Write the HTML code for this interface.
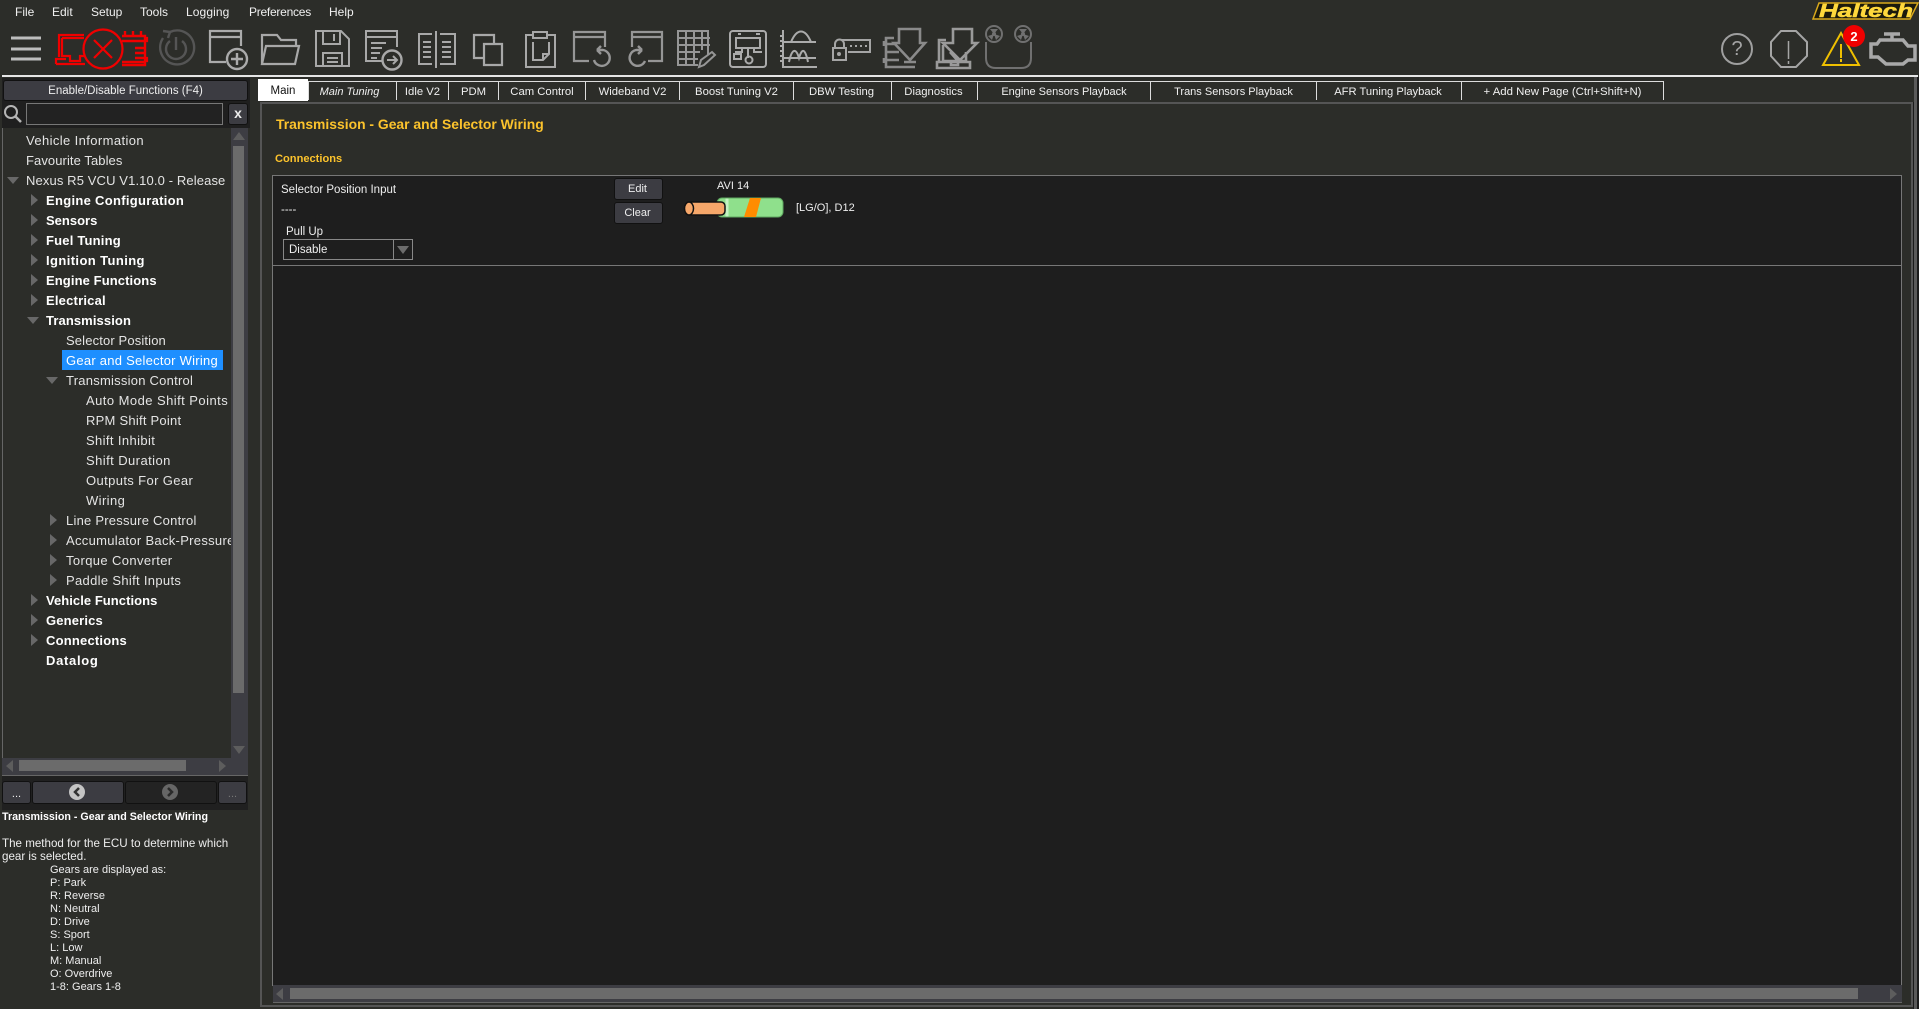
<!DOCTYPE html>
<html><head><meta charset="utf-8"><title>Haltech</title>
<style>
html,body{margin:0;padding:0;width:1919px;height:1009px;overflow:hidden;background:#2c2d29}
body{position:relative;font-family:"Liberation Sans",sans-serif;color:#eee;font-size:12px}
.a{position:absolute;white-space:nowrap}
.m{top:3px;line-height:18px;font-size:12px;color:#f0f0f0}
.t{top:81px;height:19px;line-height:20px;text-align:center;font-size:11.3px;color:#f0f0f0;border-left:1px solid #ddd;border-top:1px solid #ddd;box-sizing:border-box}
.r{line-height:20px;height:20px;font-size:13px;color:#e4e4e4;overflow:hidden}
.b{font-weight:bold;color:#fff}
.tr{position:absolute;width:0;height:0}
.rt{border-left:7px solid #686868;border-top:6px solid transparent;border-bottom:6px solid transparent}
.dn{border-top:7px solid #686868;border-left:6px solid transparent;border-right:6px solid transparent}
.btn{position:absolute;background:#3c3c42;border:1px solid #111;border-radius:3px;box-sizing:border-box;text-align:center;color:#eee}
.d{left:2px;font-size:11px;line-height:13px;color:#eee}
svg{position:absolute;left:0;top:0}
</style></head><body>

<div class="a m" style="left:15px">File</div>
<div class="a m" style="left:52px">Edit</div>
<div class="a m" style="left:91px">Setup</div>
<div class="a m" style="left:140px">Tools</div>
<div class="a m" style="left:186px;letter-spacing:.1px">Logging</div>
<div class="a m" style="left:249px;letter-spacing:-.25px">Preferences</div>
<div class="a m" style="left:329px">Help</div>

<svg width="1919" height="78" viewBox="0 0 1919 78" fill="none" stroke="#a8a8a8" stroke-width="2">
<!-- hamburger -->
<path d="M11 38h30M11 49h30M11 59h30" stroke="#bdbdbd" stroke-width="3"/>
<!-- red disconnected -->
<g stroke="#f00000" stroke-width="2.2">
<path d="M84 35H59V57M62 38H84M62 38V56H70V61H80V56H84M56 64V59H66M56 64H85"/>
<circle cx="103" cy="49" r="19.500"/>
<path d="M94 40L112 58M112 40L94 58"/>
<path d="M122 36H145V65H122M125 31V36M133 31V36M141 31V36M122 41H145M135 48H145M135 53H145M135 58H145M122 62H145" stroke-width="2.400"/>
<path d="M145 38h2v3h-2M145 58h2v3h-2"/>
</g>
<!-- power -->
<g stroke="#555" stroke-width="2.4">
<path d="M170 32A17 17 0 1 1 163 38"/>
<path d="M163 31L170 32L168 38"/>
<path d="M170 41A10 10 0 1 0 182 41M176 37V50"/>
</g>
<!-- new window -->
<g stroke="#ababab">
<path d="M226 62H210V31H241V46M210 37H241" stroke-width="2.2"/>
<circle cx="237" cy="59" r="10" stroke-width="2.4"/>
<path d="M237 53V65M231 59H243" stroke-width="2.4"/>
</g>
<!-- folder -->
<path d="M262 64V35H277L281 40H296V46M262 64L266 46H299L295 64Z" stroke-width="2.2"/>
<!-- save -->
<path d="M316 31H341L349 39V66H316ZM323 31V44H340V31M334 34V41M323 66V53H342V66M327 58H338M327 62H338" stroke-width="2"/>
<!-- doc arrow -->
<path d="M382 61H366V31H397V47M366 37H397M371 43H386M371 48H382M371 53H380M371 58H377" stroke-width="2"/>
<circle cx="392" cy="60" r="9.5" stroke-width="2.4"/>
<path d="M387 60H397M393 56L397 60L393 64" stroke-width="2"/>
<!-- columns -->
<path d="M436 31V68M432 34H419V64H432M440 34H455V64H440M423 42H431M423 47H431M423 52H431M423 57H431M442 42H451M442 47H451M442 52H451M442 57H451" stroke-width="2"/>
<!-- copy -->
<path d="M484 58H474V35H494V44M484 44H502V65H484Z" stroke-width="2.2"/>
<!-- clipboard -->
<path d="M533 35H526V67H555V35H547M533 32H547V38H533ZM533 42V60H543L549 54V42M543 60V54H549" stroke-width="2"/>
<!-- undo -->
<g stroke="#969696" stroke-width="2.2">
<path d="M589 61H574V32H605V47M574 37H605"/>
<path d="M597 50H603A8 8 0 1 1 594 60M597 50L601 46M597 50L601 54" stroke-width="2.4"/>
<path d="M632 47V37H662V32H632V37M662 32V61H648"/>
<path d="M642 50H636A8 8 0 1 0 645 61M642 50L638 46M642 50L638 54" stroke-width="2.4"/>
<!-- table -->
<path d="M708 55V31H678V65H698M678 38H710M678 45H710M678 52H700M678 59H698M686 31V65M694 31V65M702 31V50" stroke-width="2"/>
<path d="M699 67L701 60L712 52L715 55L704 65Z" stroke-width="2"/>
</g>
<!-- board -->
<g stroke="#ababab" stroke-width="2">
<rect x="730" y="31" width="36" height="36" rx="3"/>
<path d="M736 38H760V48H736ZM738 34H741M756 34H760M748 48V58M742 48V52H735M754 48V52H762"/>
<rect x="734" y="54" width="7" height="5"/><circle cx="749" cy="60" r="3.5"/>
<path d="M783 30V67H817M780 36h3M780 41h3M780 46h3M780 51h3M780 56h3M780 61h3M783 42H816M783 58H816M791 42C797 28 805 28 811 42M789 62C792 48 796 48 799 58C802 48 805 48 808 62" stroke-width="2"/>
</g>
<!-- lock card -->
<g stroke="#a5a5a5" stroke-width="2">
<path d="M841 40H870V52H848M833 48V60H846V48ZM835 48V44A4 4 0 0 1 844 44V48"/>
<path d="M850 46H868" stroke-dasharray="2 3"/><circle cx="839" cy="54" r="1"/>
</g>
<!-- ecu download -->
<g stroke="#8a8a8a" stroke-width="2.6">
<path d="M894 38H886V67H915M886 44H897M886 52H899M886 60H899M884 41v5M884 58v5M904 62H916"/>
<path d="M899 29H920V43H925L910 60L894 43H899Z"/>
</g>
<!-- laptop download -->
<g stroke="#9a9a9a" stroke-width="2.6">
<path d="M946 40H939V61M943 45V61H965M950 52L958 61M966 52V61M937 68V62H970V68ZM951 62V65H958V62"/>
<path d="M953 29H972V43H977L960 60L943 43H953Z"/>
</g>
<!-- reels -->
<g stroke="#707070" stroke-width="2">
<circle cx="994" cy="34" r="8"/><circle cx="1023" cy="34" r="8"/>
<path d="M986 42V58Q986 68 996 68H1021Q1031 68 1031 58V42"/>
</g>
<g fill="#707070" stroke="none">
<circle cx="994" cy="34" r="2"/><circle cx="1023" cy="34" r="2"/>
<path d="M990 29L994 34L998 29ZM988 36L994 34L992 40ZM1000 36L994 34L996 40ZM1019 29L1023 34L1027 29ZM1017 36L1023 34L1021 40ZM1029 36L1023 34L1025 40Z"/>
</g>
<!-- right icons -->
<circle cx="1737" cy="49" r="15" stroke="#9f9f9f" stroke-width="2"/>
<text x="1737" y="55" font-family="Liberation Sans" font-size="20" fill="#a5a5a5" stroke="none" text-anchor="middle">?</text>
<path d="M1781 31H1796L1807 42V56L1796 67H1781L1771 56V42Z" stroke="#a5a5a5" stroke-width="2"/>
<path d="M1788.500 41V59M1788.500 61V64" stroke="#a5a5a5" stroke-width="1.500"/>
<path d="M1841 33L1859 65H1823Z" stroke="#f0c000" stroke-width="2"/>
<path d="M1841 44V58M1841 59V62" stroke="#f0c000" stroke-width="2"/>
<circle cx="1854" cy="36" r="11" fill="#f00000" stroke="none"/>
<text x="1854" y="41" font-family="Liberation Sans" font-weight="bold" font-size="13" fill="#fff" stroke="none" text-anchor="middle">2</text>
<path d="M1884 34H1900M1892 34V40M1880 40H1903L1908 46H1915V60H1908L1903 64H1886L1878 57H1871V44H1877Z" stroke="#a9a9a9" stroke-width="3.500"/>
<!-- logo -->
<path d="M1819 3H1918L1910 19H1813Z" fill="#1c1a0c" stroke="#d9a91c" stroke-width="1.500"/>
<text x="1866" y="17" font-family="Liberation Sans" font-weight="bold" font-style="italic" font-size="18" textLength="94" lengthAdjust="spacingAndGlyphs" fill="#ffd83c" stroke="#ffd83c" stroke-width=".5" text-anchor="middle">Haltech</text>
</svg>

<!-- top white line -->
<div class="a" style="left:2px;top:75px;width:1916px;height:2px;background:#e6e6e6"></div>

<!-- sidebar -->
<div class="a" style="left:0;top:77px;width:260px;height:932px;background:#2c2d29"></div>
<div class="a" style="left:2px;top:78px;width:248px;height:50px;background:#1f1f1f"></div>
<div class="btn" style="left:3px;top:80px;width:245px;height:21px;line-height:20px;font-size:11.500px">Enable/Disable Functions (F4)</div>
<svg width="24" height="24" style="left:1px;top:102px" fill="none" stroke="#b5b5b5"><circle cx="10" cy="10" r="6" stroke-width="2"/><path d="M14 14L20 20" stroke-width="2.500"/></svg>
<div class="a" style="left:26px;top:103px;width:197px;height:22px;border:1px solid #777;box-sizing:border-box;background:#222"></div>
<div class="btn" style="left:228px;top:103px;width:20px;height:22px;font-weight:bold;line-height:19px;font-size:14px">x</div>

<!-- tree -->
<div class="a" style="left:2px;top:128px;width:246px;height:648px;border-left:1px solid #666;border-bottom:1px solid #666;box-sizing:border-box;overflow:hidden">
</div>
<div class="a" style="left:62px;top:350px;width:161px;height:20px;background:#1e8fff"></div>
<div class="a r" style="left:26px;top:131px;letter-spacing:.39px">Vehicle Information</div>
<div class="a r" style="left:26px;top:151px;letter-spacing:.08px">Favourite Tables</div>
<div class="a r" style="left:26px;top:171px;letter-spacing:.12px">Nexus R5 VCU V1.10.0 - Release</div>
<div class="a r b" style="left:46px;top:191px;letter-spacing:.3px">Engine Configuration</div>
<div class="a r b" style="left:46px;top:211px">Sensors</div>
<div class="a r b" style="left:46px;top:231px;letter-spacing:.2px">Fuel Tuning</div>
<div class="a r b" style="left:46px;top:251px;letter-spacing:.4px">Ignition Tuning</div>
<div class="a r b" style="left:46px;top:271px;letter-spacing:.1px">Engine Functions</div>
<div class="a r b" style="left:46px;top:291px;letter-spacing:.2px">Electrical</div>
<div class="a r b" style="left:46px;top:311px;letter-spacing:.1px">Transmission</div>
<div class="a r" style="left:66px;top:331px;letter-spacing:.14px">Selector Position</div>
<div class="a r" style="left:66px;top:351px;color:#fff;letter-spacing:.25px">Gear and Selector Wiring</div>
<div class="a r" style="left:66px;top:371px;letter-spacing:.24px">Transmission Control</div>
<div class="a r" style="left:86px;top:391px;letter-spacing:.45px">Auto Mode Shift Points</div>
<div class="a r" style="left:86px;top:411px;letter-spacing:.24px">RPM Shift Point</div>
<div class="a r" style="left:86px;top:431px;letter-spacing:.38px">Shift Inhibit</div>
<div class="a r" style="left:86px;top:451px;letter-spacing:.43px">Shift Duration</div>
<div class="a r" style="left:86px;top:471px;letter-spacing:.38px">Outputs For Gear</div>
<div class="a r" style="left:86px;top:491px;letter-spacing:.4px">Wiring</div>
<div class="a r" style="left:66px;top:511px;letter-spacing:.23px">Line Pressure Control</div>
<div class="a r" style="left:66px;top:531px;width:165px;letter-spacing:.3px">Accumulator Back-Pressure</div>
<div class="a r" style="left:66px;top:551px;letter-spacing:.38px">Torque Converter</div>
<div class="a r" style="left:66px;top:571px;letter-spacing:.32px">Paddle Shift Inputs</div>
<div class="a r b" style="left:46px;top:591px;letter-spacing:.05px">Vehicle Functions</div>
<div class="a r b" style="left:46px;top:611px;letter-spacing:.15px">Generics</div>
<div class="a r b" style="left:46px;top:631px;letter-spacing:.2px">Connections</div>
<div class="a r b" style="left:46px;top:651px;letter-spacing:.7px">Datalog</div>

<div class="tr dn" style="left:7px;top:177px"></div>
<div class="tr rt" style="left:31px;top:194px"></div>
<div class="tr rt" style="left:31px;top:214px"></div>
<div class="tr rt" style="left:31px;top:234px"></div>
<div class="tr rt" style="left:31px;top:254px"></div>
<div class="tr rt" style="left:31px;top:274px"></div>
<div class="tr rt" style="left:31px;top:294px"></div>
<div class="tr dn" style="left:27px;top:317px"></div>
<div class="tr dn" style="left:46px;top:377px"></div>
<div class="tr rt" style="left:50px;top:514px"></div>
<div class="tr rt" style="left:50px;top:534px"></div>
<div class="tr rt" style="left:50px;top:554px"></div>
<div class="tr rt" style="left:50px;top:574px"></div>
<div class="tr rt" style="left:31px;top:594px"></div>
<div class="tr rt" style="left:31px;top:614px"></div>
<div class="tr rt" style="left:31px;top:634px"></div>

<!-- tree scrollbars -->
<div class="a" style="left:231px;top:128px;width:17px;height:630px;background:#3d3d43"></div>
<div class="a" style="left:233px;top:146px;width:11px;height:547px;background:#6b6b6b"></div>
<div class="tr" style="left:233px;top:132px;border-bottom:8px solid #5d5d5d;border-left:6px solid transparent;border-right:6px solid transparent"></div>
<div class="tr dn" style="left:233px;top:746px;border-top-color:#5d5d5d;border-top-width:8px"></div>
<div class="a" style="left:2px;top:758px;width:246px;height:17px;background:#3d3d43;border-bottom:1px solid #666"></div>
<div class="a" style="left:19px;top:760px;width:167px;height:11px;background:#6b6b6b"></div>
<div class="tr" style="left:6px;top:760px;border-right:7px solid #5d5d5d;border-top:6px solid transparent;border-bottom:6px solid transparent"></div>
<div class="tr rt" style="left:219px;top:760px;border-left-color:#5d5d5d"></div>

<!-- nav -->
<div class="a" style="left:2px;top:776px;width:246px;height:34px;background:#202020"></div>
<div class="btn" style="left:2px;top:781px;width:29px;height:23px;line-height:24px;font-size:11px">...</div>
<div class="btn" style="left:32px;top:781px;width:92px;height:23px"></div>
<div class="btn" style="left:125px;top:781px;width:92px;height:23px;background:#232323"></div>
<div class="btn" style="left:218px;top:781px;width:29px;height:23px;line-height:24px;font-size:11px;color:#777">...</div>
<svg width="260" height="30" style="left:0;top:778px" fill="none" stroke-width="2.500">
<circle cx="77" cy="14" r="8" fill="#c4c4c4"/><path d="M79 10L75 14L79 18" stroke="#333"/>
<circle cx="170" cy="14" r="8" fill="#666"/><path d="M168 10L172 14L168 18" stroke="#2a2a2a"/>
</svg>

<!-- description -->
<div class="a d" style="top:811px;font-weight:bold;color:#fff;font-size:10.700px">Transmission - Gear and Selector Wiring</div>
<div class="a d" style="top:837px;font-size:11.600px">The method for the ECU to determine which</div>
<div class="a d" style="top:850px;font-size:11.600px">gear is selected.</div>
<div class="a d" style="top:864px;left:50px">Gears are displayed as:</div>
<div class="a d" style="top:877px;left:50px">P: Park</div>
<div class="a d" style="top:890px;left:50px">R: Reverse</div>
<div class="a d" style="top:903px;left:50px">N: Neutral</div>
<div class="a d" style="top:916px;left:50px">D: Drive</div>
<div class="a d" style="top:929px;left:50px">S: Sport</div>
<div class="a d" style="top:942px;left:50px">L: Low</div>
<div class="a d" style="top:955px;left:50px">M: Manual</div>
<div class="a d" style="top:968px;left:50px">O: Overdrive</div>
<div class="a d" style="top:981px;left:50px">1-8: Gears 1-8</div>

<!-- tabs -->
<div class="a" style="left:258px;top:79px;width:50px;height:22px;background:#fff;color:#111;text-align:center;line-height:24px;font-size:11.500px">Main</div>
<div class="a t" style="left:308px;width:88px;font-style:italic;font-size:11px;padding-right:6px">Main Tuning</div>
<div class="a t" style="left:396px;width:52px">Idle V2</div>
<div class="a t" style="left:448px;width:50px">PDM</div>
<div class="a t" style="left:498px;width:87px">Cam Control</div>
<div class="a t" style="left:585px;width:94px">Wideband V2</div>
<div class="a t" style="left:679px;width:114px">Boost Tuning V2</div>
<div class="a t" style="left:793px;width:98px;padding-right:2px">DBW Testing</div>
<div class="a t" style="left:891px;width:86px;padding-right:2px">Diagnostics</div>
<div class="a t" style="left:977px;width:173px;font-size:11px">Engine Sensors Playback</div>
<div class="a t" style="left:1150px;width:166px;font-size:11px">Trans Sensors Playback</div>
<div class="a t" style="left:1316px;width:145px;font-size:11.200px;padding-right:2px">AFR Tuning Playback</div>
<div class="a t" style="left:1461px;width:203px;border-right:1px solid #ddd;font-size:11.400px">+ Add New Page (Ctrl+Shift+N)</div>

<!-- main panel -->
<div class="a" style="left:260px;top:102px;width:1653px;height:905px;border:2px solid #555;border-bottom:0;box-sizing:border-box;background:#2c2d29"></div>
<div class="a" style="left:1913px;top:102px;width:1px;height:907px;background:#1b1b1b"></div>
<div class="a" style="left:1914px;top:77px;width:3px;height:932px;background:#5a5a5a"></div>
<div class="a" style="left:1917px;top:77px;width:2px;height:932px;background:#1b1b1b"></div>
<div class="a" style="left:262px;top:1005px;width:1650px;height:2px;background:#555"></div>

<div class="a" style="left:276px;top:115px;font-weight:bold;font-size:13.900px;line-height:18px;color:#fcc32c">Transmission - Gear and Selector Wiring</div>
<div class="a" style="left:275px;top:151px;font-weight:bold;font-size:11.100px;line-height:16px;color:#fcc32c">Connections</div>

<div class="a" style="left:272px;top:175px;width:1630px;height:811px;background:#1e1e1e;border:1px solid #777;border-bottom:0;box-sizing:border-box"></div>
<div class="a" style="left:273px;top:265px;width:1628px;height:1px;background:#777"></div>

<div class="a" style="left:281px;top:182px;font-size:11.500px;line-height:16px">Selector Position Input</div>
<div class="a" style="left:281px;top:202px;font-size:11.500px;line-height:16px">----</div>
<div class="a" style="left:286px;top:224px;font-size:11.500px;line-height:16px">Pull Up</div>
<div class="a" style="left:283px;top:239px;width:130px;height:21px;border:1px solid #888;box-sizing:border-box;font-size:11.500px;line-height:20px;padding-left:5px">Disable</div>
<div class="a" style="left:393px;top:240px;width:1px;height:19px;background:#888"></div>
<div class="tr dn" style="left:397px;top:246px;border-top-color:#6d6d6d;border-top-width:8px"></div>

<div class="btn" style="left:614px;top:178px;width:49px;height:22px;line-height:21px;font-size:11px;padding-right:2px">Edit</div>
<div class="btn" style="left:614px;top:202px;width:49px;height:22px;line-height:20px;font-size:11px;padding-right:2px">Clear</div>
<div class="a" style="left:717px;top:178px;font-size:11px;line-height:16px">AVI 14</div>
<svg width="110" height="24" style="left:680px;top:196px">
<rect x="37" y="2" width="66" height="19" rx="5" fill="#8fe08c" stroke="#5fa860"/>
<path d="M47 2.500V20.500" stroke="#c4f3c4" stroke-width="3"/>
<path d="M70 2H81L76 21H64Z" fill="#ff8c00"/>
<rect x="7" y="6" width="38" height="13" rx="4" fill="#f6a76a" stroke="#111" stroke-width="1.500"/>
<ellipse cx="9" cy="12.500" rx="4.500" ry="6.500" fill="#f6a76a" stroke="#111" stroke-width="1.500"/>
</svg>
<div class="a" style="left:796px;top:200px;font-size:11px;line-height:16px">[LG/O], D12</div>

<!-- bottom scrollbar -->
<div class="a" style="left:273px;top:985px;width:1629px;height:18px;background:#3d3d43;border-bottom:1px solid #666;box-sizing:border-box"></div>
<div class="a" style="left:290px;top:988px;width:1568px;height:11px;background:#6b6b6b"></div>
<div class="tr" style="left:276px;top:988px;border-right:7px solid #5d5d5d;border-top:6px solid transparent;border-bottom:6px solid transparent"></div>
<div class="tr rt" style="left:1890px;top:988px;border-left-color:#5d5d5d"></div>
</body></html>
